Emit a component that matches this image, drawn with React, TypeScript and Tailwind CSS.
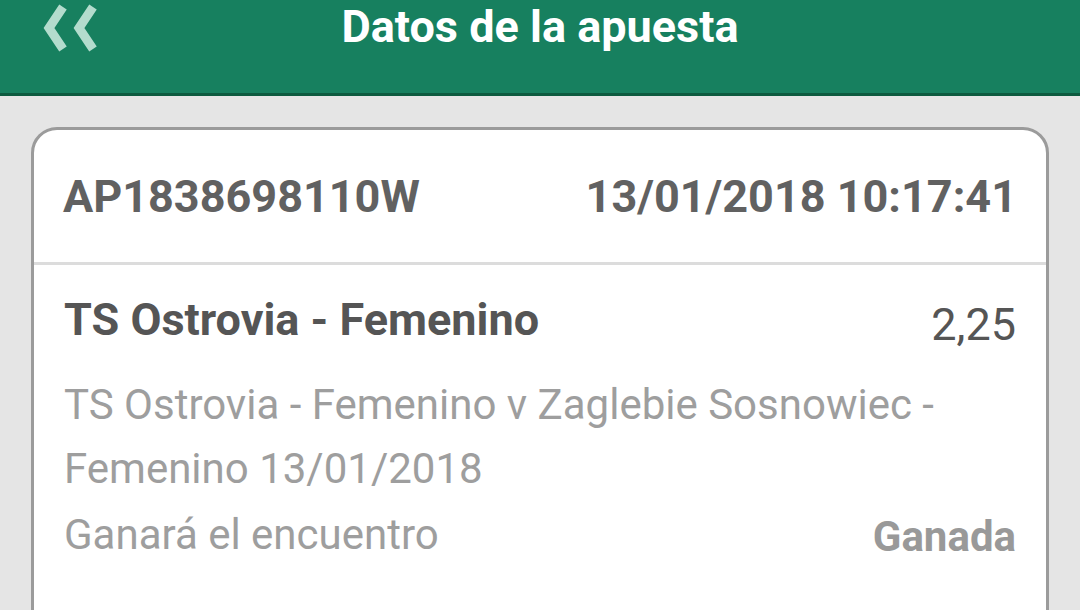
import React from 'react'

const App = () => {
  return (
    <div className="w-[1080px] h-[610px] overflow-hidden bg-[#e5e5e5] font-['Roboto',sans-serif]">
      <header className="h-[96px] bg-[#17805f] border-b-[3px] border-[#0d5a3f] flex items-center relative">
        <svg className="absolute left-[40px] top-[4px]" width="60" height="50" viewBox="0 0 60 50" fill="none">
          <path d="M23 3 L9 24 L23 45" stroke="#b3dccd" strokeWidth="9" strokeLinecap="butt" strokeLinejoin="miter" />
          <path d="M53 3 L39 24 L53 45" stroke="#b3dccd" strokeWidth="9" strokeLinecap="butt" strokeLinejoin="miter" />
        </svg>
        <h1 className="w-full text-center text-white font-bold text-[45px] leading-none -mt-[40px]">
          Datos de la apuesta
        </h1>
      </header>
      <div className="px-[31px] pt-[31px]">
        <div className="bg-white border-[3px] border-[#9b9b9b] rounded-[26px] h-[600px]">
          <div className="h-[135px] flex items-center justify-between px-[29px] border-b-[3px] border-[#dcdcdc] text-[#616161] font-bold text-[45px] leading-none">
            <span>AP1838698110W</span>
            <span>13/01/2018 10:17:41</span>
          </div>
          <div className="px-[30px] pt-[32px]">
            <div className="flex justify-between items-start">
              <span className="text-[#555555] font-bold text-[45px] leading-none">TS Ostrovia - Femenino</span>
              <span className="text-[#555555] text-[45px] leading-none mt-[5px]">2,25</span>
            </div>
            <p className="text-[#9e9e9e] text-[42px] leading-[64px] mt-[26px]">
              TS Ostrovia - Femenino v Zaglebie Sosnowiec -<br />Femenino 13/01/2018
            </p>
            <div className="flex justify-between items-center">
              <span className="text-[#9e9e9e] text-[42px] leading-[64px]">Ganará el encuentro</span>
              <span className="text-[#999999] font-bold text-[42px] leading-[64px] mt-[4px]">Ganada</span>
            </div>
          </div>
        </div>
      </div>
    </div>
  )
}

export default App
